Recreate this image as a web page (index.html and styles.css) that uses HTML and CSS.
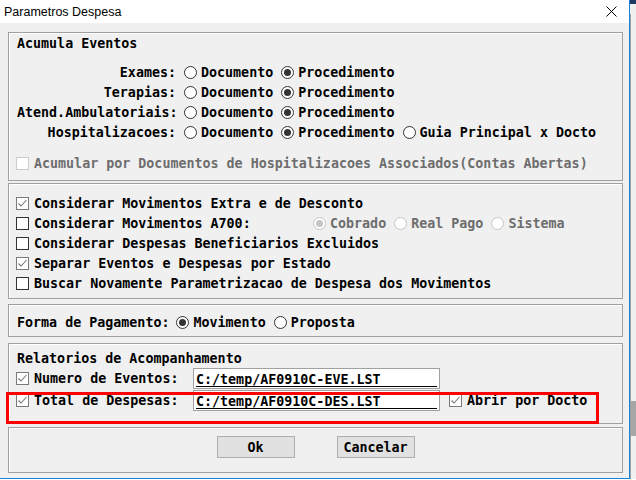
FILE: index.html
```html
<!DOCTYPE html>
<html lang="pt">
<head>
  <meta charset="UTF-8">
  <title>Parametros Despesa</title>
  <link rel="stylesheet" href="styles.css">
</head>
<body>
<div class="screen">
  <div class="window">
    <div class="titlebar">
      <span class="title">Parametros Despesa</span>
      <svg class="close" width="11" height="11" viewBox="0 0 11 11">
        <path d="M0.5 0.5 L10.5 10.5 M10.5 0.5 L0.5 10.5" stroke="#000" stroke-width="1" fill="none"/>
      </svg>
    </div>

    <div class="content">
      <!-- acumula eventos -->
      <div class="panel p1">
        <div class="row"><span>Acumula Eventos</span></div>
        <div class="group">
          <div class="row">
            <span class="lbl">Exames:</span>
            <span class="opt"><span class="radio"></span><span>Documento</span></span>
            <span class="opt"><span class="radio on"></span><span>Procedimento</span></span>
          </div>
          <div class="row">
            <span class="lbl">Terapias:</span>
            <span class="opt"><span class="radio"></span><span>Documento</span></span>
            <span class="opt"><span class="radio on"></span><span>Procedimento</span></span>
          </div>
          <div class="row">
            <span class="lbl">Atend.Ambulatoriais:</span>
            <span class="opt"><span class="radio"></span><span>Documento</span></span>
            <span class="opt"><span class="radio on"></span><span>Procedimento</span></span>
          </div>
          <div class="row">
            <span class="lbl">Hospitalizacoes:</span>
            <span class="opt"><span class="radio"></span><span>Documento</span></span>
            <span class="opt"><span class="radio on"></span><span>Procedimento</span></span>
            <span class="opt"><span class="radio"></span><span>Guia Principal x Docto</span></span>
          </div>
        </div>
        <div class="row disabled">
          <span class="check off"></span><span>Acumular por Documentos de Hospitalizacoes Associados(Contas Abertas)</span>
        </div>
      </div>

      <!-- movimentos -->
      <div class="panel p2">
        <div class="row">
          <span class="check checked"><svg width="11" height="11" viewBox="0 0 11 11"><path d="M1.5 5.5 L4 8 L9.5 2" stroke="#777" stroke-width="1.1" fill="none"/></svg></span><span>Considerar Movimentos Extra e de Desconto</span>
        </div>
        <div class="row">
          <span class="check"></span><span class="a700">Considerar Movimentos A700:</span>
          <span class="opt disabled"><span class="radio on"></span><span>Cobrado</span></span>
          <span class="opt disabled"><span class="radio"></span><span>Real Pago</span></span>
          <span class="opt disabled"><span class="radio"></span><span>Sistema</span></span>
        </div>
        <div class="row">
          <span class="check"></span><span>Considerar Despesas Beneficiarios Excluidos</span>
        </div>
        <div class="row">
          <span class="check checked"><svg width="11" height="11" viewBox="0 0 11 11"><path d="M1.5 5.5 L4 8 L9.5 2" stroke="#777" stroke-width="1.1" fill="none"/></svg></span><span>Separar Eventos e Despesas por Estado</span>
        </div>
        <div class="row">
          <span class="check"></span><span>Buscar Novamente Parametrizacao de Despesa dos Movimentos</span>
        </div>
      </div>

      <!-- forma de pagamento -->
      <div class="panel p3">
        <div class="row">
          <span>Forma de Pagamento:</span>
          <span class="opt first"><span class="radio on"></span><span>Movimento</span></span>
          <span class="opt"><span class="radio"></span><span>Proposta</span></span>
        </div>
      </div>

      <!-- relatorios -->
      <div class="panel p4">
        <div class="row"><span>Relatorios de Acompanhamento</span></div>
        <div class="frow">
          <span class="check checked"><svg width="11" height="11" viewBox="0 0 11 11"><path d="M1.5 5.5 L4 8 L9.5 2" stroke="#777" stroke-width="1.1" fill="none"/></svg></span><span class="flbl">Numero de Eventos:</span>
          <span class="field"><span class="val">C:/temp/AF0910C-EVE.LST</span></span>
        </div>
        <div class="frow second">
          <span class="check checked"><svg width="11" height="11" viewBox="0 0 11 11"><path d="M1.5 5.5 L4 8 L9.5 2" stroke="#777" stroke-width="1.1" fill="none"/></svg></span><span class="flbl">Total de Despesas:</span>
          <span class="field"><span class="val">C:/temp/AF0910C-DES.LST</span></span>
          <span class="check checked after"><svg width="11" height="11" viewBox="0 0 11 11"><path d="M1.5 5.5 L4 8 L9.5 2" stroke="#777" stroke-width="1.1" fill="none"/></svg></span><span>Abrir por Docto</span>
        </div>
      </div>

      <!-- botoes -->
      <div class="panel p5">
        <button class="btn">Ok</button>
        <button class="btn">Cancelar</button>
      </div>
    </div>

    <div class="highlight"></div>
  </div>

  <div class="edge">
    <div class="edge-top"></div>
    <div class="edge-track">
      <div class="edge-fill"></div>
      <div class="thumb"></div>
    </div>
  </div>
</div>
</body>
</html>
```

FILE: styles.css
```css
body {
  margin: 0;
  background: #ffffff;
  font-family: "DejaVu Sans Mono", "Liberation Mono", monospace;
  font-size: 13.33px;
  font-weight: bold;
  color: #000;
}

.screen {
  display: flex;
  height: 480px;
}

.window {
  position: relative;
  width: 630px;
  height: 479px;
  box-sizing: border-box;
  border-right: 1px solid #1883d7;
  border-bottom: 1px solid #1883d7;
  background: #f0f0f0;
  display: flex;
  flex-direction: column;
}

.titlebar {
  height: 23px;
  flex: none;
  background: #fff;
  display: flex;
  align-items: center;
  justify-content: space-between;
  padding: 0 12px 0 4px;
}

.title {
  font-family: "Liberation Sans", Arial, sans-serif;
  font-size: 12.5px;
  font-weight: normal;
  color: #000;
}

.content {
  padding: 9px 0 0 8px;
  display: flex;
  flex-direction: column;
}

.panel {
  width: 615px;
  box-sizing: border-box;
  border: 1px solid #a0a0a0;
  box-shadow: inset 1px 1px 0 #fff;
  padding-left: 8px;
  flex: none;
}

.row {
  height: 20px;
  display: flex;
  align-items: center;
  white-space: nowrap;
}

.frow {
  height: 21px;
  display: flex;
  align-items: center;
  white-space: nowrap;
}

.frow.second {
  margin-top: 1px;
}

/* panel sizes */
.p1 {
  height: 149px;
}

.p1 .group {
  margin: 9px 0 11px 0;
}

.p2 {
  height: 116px;
  margin-top: 2px;
  padding-top: 9px;
}

.p3 {
  height: 33px;
  margin-top: 5px;
  padding-top: 7px;
}

.p4 {
  height: 81px;
  margin-top: 6px;
  padding-top: 4px;
}

.p4 .frow:first-of-type {
  margin-top: 3px;
}

.p5 {
  height: 46px;
  margin-top: 3px;
  padding: 8px 0 0 0;
  display: flex;
  justify-content: center;
  align-items: flex-start;
  gap: 42px;
}

.lbl {
  width: 159px;
  text-align: right;
}

.a700 {
  width: 271px;
}

.flbl {
  width: 159px;
}

/* radio buttons */
.opt {
  display: inline-flex;
  align-items: center;
  gap: 4px;
  margin-left: 8px;
}

.opt.first {
  margin-left: 7px;
}

.radio {
  width: 13px;
  height: 13px;
  box-sizing: border-box;
  border: 1px solid #333;
  border-radius: 50%;
  background: #fff;
  display: inline-flex;
  align-items: center;
  justify-content: center;
  flex: none;
}

.radio.on::after {
  content: "";
  width: 7px;
  height: 7px;
  border-radius: 50%;
  background: #333;
}

.disabled {
  color: #6d6d6d;
}

.disabled .radio {
  border-color: #c4c4c4;
}

.disabled .radio.on::after {
  background: #c4c4c4;
}

/* checkboxes */
.check {
  width: 13px;
  height: 13px;
  box-sizing: border-box;
  border: 1px solid #333;
  background: #fff;
  margin: 0 5px 0 -1px;
  display: inline-flex;
  align-items: center;
  justify-content: center;
  flex: none;
}

.check.checked {
  border-color: #7a7a7a;
}

.check.off {
  border-color: #cccccc;
}

.check.after {
  margin-left: 9px;
}

/* text fields */
.field {
  width: 247px;
  height: 21px;
  box-sizing: border-box;
  border: 1px solid #a0a0a0;
  background: #fff;
  flex: none;
}

.val {
  display: block;
  margin: 0 2px;
  padding-top: 3px;
  line-height: 16px;
  height: 14px;
  border-bottom: 1px solid #000;
}

/* buttons */
.btn {
  width: 78px;
  height: 22px;
  box-sizing: border-box;
  background: #e1e1e1;
  border: 1px solid #adadad;
  font-family: "DejaVu Sans Mono", "Liberation Mono", monospace;
  font-size: 13.33px;
  font-weight: bold;
  color: #000;
  padding: 0;
}

/* red annotation */
.highlight {
  position: absolute;
  left: 6px;
  top: 392px;
  width: 593px;
  height: 32px;
  box-sizing: border-box;
  border: 3px solid #ff0000;
}

/* neighbouring window edge */
.edge {
  width: 6px;
  height: 479px;
  display: flex;
  flex-direction: column;
  background: #f0f0f0;
}

.edge-top {
  height: 4px;
  background: #1f3b63;
}

.edge-track {
  flex: 1;
  margin-top: 10px;
  border-left: 1px solid #a0a0a0;
  display: flex;
  flex-direction: column;
}

.edge-fill {
  height: 387px;
}

.thumb {
  height: 35px;
  background: #a6a6a6;
}
```
